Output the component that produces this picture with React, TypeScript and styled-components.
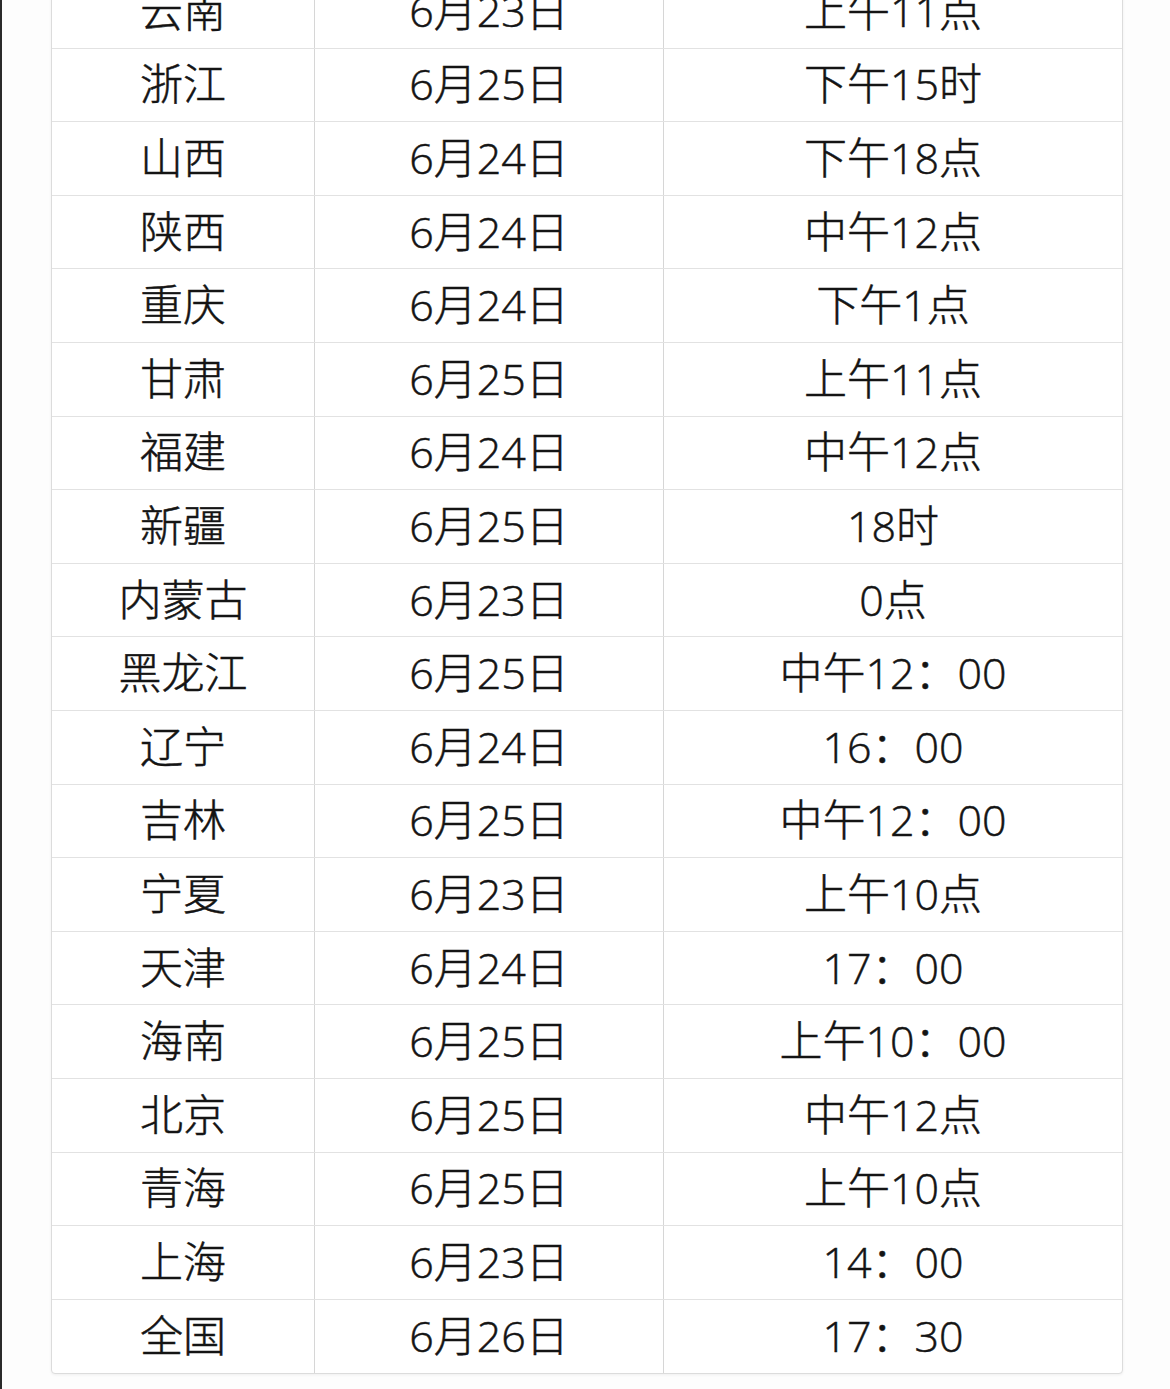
import React from "react";
import styled, { createGlobalStyle } from "styled-components";

interface Row {
  region: string;
  date: string;
  time: string;
}

const rows: Row[] = [
  { region: "云南", date: "6月23日", time: "上午11点" },
  { region: "浙江", date: "6月25日", time: "下午15时" },
  { region: "山西", date: "6月24日", time: "下午18点" },
  { region: "陕西", date: "6月24日", time: "中午12点" },
  { region: "重庆", date: "6月24日", time: "下午1点" },
  { region: "甘肃", date: "6月25日", time: "上午11点" },
  { region: "福建", date: "6月24日", time: "中午12点" },
  { region: "新疆", date: "6月25日", time: "18时" },
  { region: "内蒙古", date: "6月23日", time: "0点" },
  { region: "黑龙江", date: "6月25日", time: "中午12：00" },
  { region: "辽宁", date: "6月24日", time: "16：00" },
  { region: "吉林", date: "6月25日", time: "中午12：00" },
  { region: "宁夏", date: "6月23日", time: "上午10点" },
  { region: "天津", date: "6月24日", time: "17：00" },
  { region: "海南", date: "6月25日", time: "上午10：00" },
  { region: "北京", date: "6月25日", time: "中午12点" },
  { region: "青海", date: "6月25日", time: "上午10点" },
  { region: "上海", date: "6月23日", time: "14：00" },
  { region: "全国", date: "6月26日", time: "17：30" },
];

const GlobalStyle = createGlobalStyle`
  html, body {
    margin: 0;
    padding: 0;
    background: #fdfdfd;
    overflow: hidden;
  }
`;

export default function App() {
  return (
    <>
      <GlobalStyle />
      <Page>
        <Sheet>
          {rows.map((r, i) => (
            <TableRow key={r.region} last={i === rows.length - 1}>
              <Cell>{r.region}</Cell>
              <Cell divider>{r.date}</Cell>
              <Cell divider>{r.time}</Cell>
            </TableRow>
          ))}
        </Sheet>
      </Page>
    </>
  );
}

const Page = styled.div`
  display: flow-root;
  height: 1389px;
  border-left: 2px solid #2a2a2a;
  box-sizing: border-box;
  padding: 0 47px 0 49px;
  background: #fdfdfd;
`;

const Sheet = styled.div`
  margin-top: -26px;
  background: #ffffff;
  border: 1px solid #dcdcdc;
  border-radius: 0 0 4px 4px;
  box-shadow: 0 1px 3px rgba(0, 0, 0, 0.06);
  font-family: "Open Sans", "Noto Sans CJK SC", sans-serif;
  font-weight: 300;
  color: #141414;
  -webkit-text-stroke: 0.5px #141414;
`;

const TableRow = styled.div<{ last?: boolean }>`
  display: grid;
  grid-template-columns: 262px 349px 1fr;
  height: 73.6px;
  box-sizing: border-box;
  border-bottom: ${(p) => (p.last ? "none" : "1px solid #e2e2e2")};
`;

const Cell = styled.div<{ divider?: boolean }>`
  display: flex;
  align-items: center;
  justify-content: center;
  padding-bottom: 2px;
  font-size: 43px;
  line-height: 1;
  white-space: nowrap;
  border-left: ${(p) => (p.divider ? "1px solid #d6d6d6" : "none")};
`;
